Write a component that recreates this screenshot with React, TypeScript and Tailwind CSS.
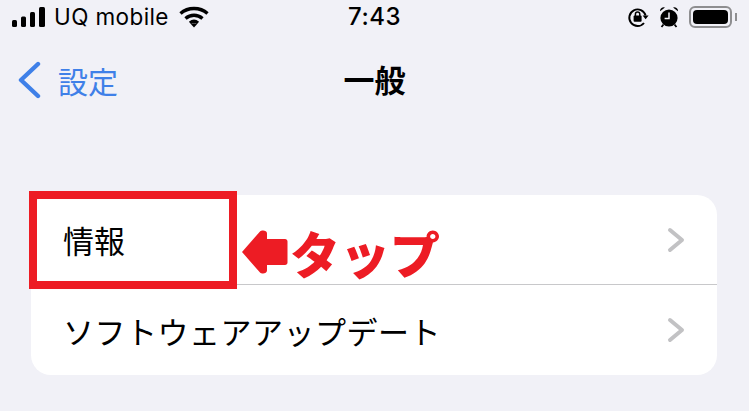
const font = { fontFamily: '"Noto Sans CJK JP", Inter, sans-serif' };

function Signal() {
  return (
    <svg width="35" height="22" viewBox="0 0 35 22" fill="#000">
      <rect x="0" y="14" width="5" height="7" rx="1.5" />
      <rect x="9" y="10.5" width="5" height="10.5" rx="1.5" />
      <rect x="18" y="6" width="5" height="15" rx="1.5" />
      <rect x="27" y="1" width="6" height="20" rx="1.5" />
    </svg>
  );
}

function Wifi() {
  return (
    <svg width="30" height="22" viewBox="0 0 30 22" fill="none" stroke="#000" strokeWidth="3.4">
      <path d="M1.5 7.5C9 .8 21 .8 28.5 7.5" />
      <path d="M6.5 12.5c5-4.4 12-4.4 17 0" />
      <path d="M11 17c2.4-2 5.6-2 8 0" />
      <path d="M15 21.5l-3-3.2c1.8-1.3 4.2-1.3 6 0z" fill="#000" stroke="none" />
    </svg>
  );
}

function RotationLock() {
  return (
    <svg width="22" height="22" viewBox="0 0 22 22" fill="none">
      <path d="M18.6 9.5A8.3 8.3 0 1 0 17 17" stroke="#000" strokeWidth="1.9" />
      <path d="M15.6 9.4h6l-3 3.8z" fill="#000" />
      <rect x="6.6" y="9.6" width="8" height="6.2" rx="1" fill="#000" />
      <path d="M8.4 10V8.2a2.2 2.2 0 0 1 4.4 0V10" stroke="#000" strokeWidth="1.5" />
    </svg>
  );
}

function Alarm() {
  return (
    <svg width="20" height="22" viewBox="0 0 20 22" fill="none">
      <circle cx="10" cy="12" r="8.6" fill="#000" />
      <path d="M1 5.2A3.6 3.6 0 0 1 6 1.6z" fill="#000" />
      <path d="M19 5.2A3.6 3.6 0 0 0 14 1.6z" fill="#000" />
      <path d="M10 6.5V12.6H5.6" stroke="#f2f2f7" strokeWidth="1.5" />
      <path d="M4.5 18.5l-2 2.5M15.5 18.5l2 2.5" stroke="#000" strokeWidth="1.8" />
    </svg>
  );
}

function Battery() {
  return (
    <div className="flex items-center gap-[3px]">
      <div className="w-[43px] h-[22px] rounded-[6px] border-2 border-[#8e8e90] p-[2px]">
        <div className="w-full h-full rounded-[4px] bg-black" />
      </div>
      <div className="w-[1.5px] h-[8px] bg-[#8e8e90]" />
    </div>
  );
}

function TapArrow() {
  return (
    <svg width="46" height="44" viewBox="0 0 46 44" fill="#ed1c24">
      <path d="M0 22 18 1.500c1.500-1.500 7-1.500 7 2V9h18c1.500 0 2.500 1 2.500 2.500v21c0 1.500-1 2.500-2.500 2.500H25v5.500c0 3.500-5.500 3.500-7 2z" />
    </svg>
  );
}

function RowChevron() {
  return (
    <svg width="18" height="26" viewBox="0 0 18 26" fill="none" stroke="#c2c2c4" strokeWidth="4" strokeLinecap="round" strokeLinejoin="round">
      <path d="M3 3l12 10L3 23" />
    </svg>
  );
}

export default function App() {
  return (
    <div className="relative w-[749px] h-[411px] overflow-hidden bg-[#f1f1f7] text-black" style={font}>
      {/* Status bar */}
      <div className="h-[34px] flex items-center justify-between pl-[12px] pr-[12px]">
        <div className="w-[290px] flex items-center">
          <Signal />
          <span className="ml-[7px] text-[22.500px] leading-none tracking-[0.4px] font-['Inter']">UQ mobile</span>
          <span className="ml-[10px] flex"><Wifi /></span>
        </div>
        <span className="text-[24px] leading-none font-medium font-['Inter'] tracking-[0.5px]">7:43</span>
        <div className="w-[290px] flex items-center justify-end">
          <RotationLock />
          <span className="ml-[10px] flex"><Alarm /></span>
          <span className="ml-[10px] flex"><Battery /></span>
        </div>
      </div>

      {/* Nav bar */}
      <div className="relative h-[89px] flex items-center justify-center">
        <span className="text-[31px] leading-none font-bold">一般</span>
        <div className="absolute left-[17px] top-[27px] flex items-center text-[#3f80e8]">
          <svg width="24" height="38" viewBox="0 0 24 38" fill="none" stroke="currentColor" strokeWidth="4.400" strokeLinecap="round" strokeLinejoin="round">
            <path d="M21 3 4 19l17 16" />
          </svg>
          <span className="ml-[17px] text-[30px] leading-none">設定</span>
        </div>
      </div>

      {/* Settings list */}
      <div className="mt-[72px] mx-[31px] w-[686px] h-[180px] rounded-[20px] bg-white flex flex-col">
        <div className="h-[90px] flex items-center justify-between pl-[32px] pr-[32px] border-b border-[#c8c8ca]">
          <span className="text-[31px] leading-none font-normal">情報</span>
          <RowChevron />
        </div>
        <div className="flex-1 flex items-center justify-between pl-[32px] pr-[32px]">
          <span className="text-[31px] leading-none font-normal tracking-[0.5px]">ソフトウェアアップデート</span>
          <RowChevron />
        </div>
      </div>

      {/* Annotation */}
      <div className="absolute left-[29px] top-[191px] w-[208px] h-[98px] border-[8px] border-[#ed1c24]" />
      <div className="absolute left-[242px] top-[227px] flex items-center">
        <TapArrow />
        <span className="ml-[2px] text-[50px] leading-none font-black text-[#ed1c24]">タップ</span>
      </div>
    </div>
  );
}
